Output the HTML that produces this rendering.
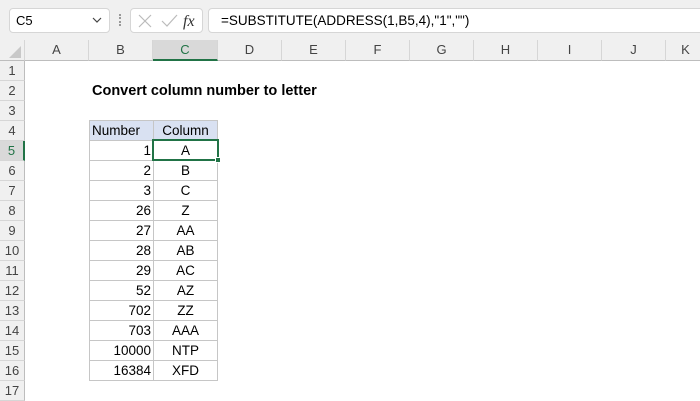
<!DOCTYPE html><html><head><style>
*{margin:0;padding:0;box-sizing:border-box}
body{width:700px;height:400px;overflow:hidden;background:#fff;font-family:"Liberation Sans",Calibri,sans-serif;position:relative;font-size:13px;color:#000}
.a{position:absolute}
.top{left:0;top:0;width:700px;height:40px;background:#f0f0f0}
.box{background:#fff;border:1px solid #d6d6d6;border-radius:4px}
.ch{top:40px;height:21px;background:#f0f0f0;border-bottom:1px solid #bdbdbd;border-right:1px solid #d6d6d6;text-align:center;line-height:20px;color:#444;font-size:13px}
.rh{left:0;width:25px;height:20px;background:#f0f0f0;border-bottom:1px solid #d6d6d6;border-right:1px solid #bdbdbd;text-align:center;line-height:20px;color:#444;font-size:13px}
.c{height:20px;line-height:20px;border-right:1px solid #c6c6c6;border-bottom:1px solid #c6c6c6;font-size:13.5px;padding:0 2px}
</style></head><body>
<div class="a top"></div>
<div class="a box" style="left:9px;top:8px;width:101px;height:25px;line-height:23px;padding-left:6px">C5</div>
<svg class="a" style="left:92px;top:16px" width="10" height="8"><path d="M1 2 L5 6 L9 2" stroke="#444" fill="none" stroke-width="1.2"/></svg>
<div class="a" style="left:119px;top:14px;width:2px;height:12px;border-left:2px dotted #999"></div>
<div class="a box" style="left:130px;top:8px;width:73px;height:25px"></div>
<svg class="a" style="left:136px;top:12px" width="65" height="18"><path d="M3 3 L15 15 M15 3 L3 15" stroke="#bbb" stroke-width="1.2"/><path d="M26 9 L31 14 L41 3" stroke="#bbb" stroke-width="1.2" fill="none"/><text x="47" y="14" font-family="Liberation Serif" font-style="italic" font-size="16" fill="#333">fx</text></svg>
<div class="a box" style="left:208px;top:8px;width:500px;height:25px;line-height:23px;padding-left:12px;font-size:13.5px">=SUBSTITUTE(ADDRESS(1,B5,4),"1","")</div>
<div class="a ch" style="left:0;width:25px;background:#f0f0f0"></div>
<svg class="a" style="left:8px;top:45px" width="14" height="14"><path d="M13 1 L13 13 L1 13Z" fill="#c8c8c8"/></svg>
<div class="a ch" style="left:25px;width:64px">A</div>
<div class="a ch" style="left:89px;width:64px">B</div>
<div class="a ch" style="left:153px;width:65px;background:#d9d9d9;border-bottom:2px solid #217346;color:#217346">C</div>
<div class="a ch" style="left:218px;width:64px">D</div>
<div class="a ch" style="left:282px;width:64px">E</div>
<div class="a ch" style="left:346px;width:64px">F</div>
<div class="a ch" style="left:410px;width:64px">G</div>
<div class="a ch" style="left:474px;width:64px">H</div>
<div class="a ch" style="left:538px;width:64px">I</div>
<div class="a ch" style="left:602px;width:64px">J</div>
<div class="a ch" style="left:666px;width:40px">K</div>
<div class="a rh" style="top:61px">1</div><div class="a rh" style="top:81px">2</div><div class="a rh" style="top:101px">3</div><div class="a rh" style="top:121px">4</div>
<div class="a rh" style="top:141px;background:#d9d9d9;border-right:2px solid #217346;color:#217346">5</div>
<div class="a rh" style="top:161px">6</div><div class="a rh" style="top:181px">7</div><div class="a rh" style="top:201px">8</div><div class="a rh" style="top:221px">9</div><div class="a rh" style="top:241px">10</div><div class="a rh" style="top:261px">11</div><div class="a rh" style="top:281px">12</div><div class="a rh" style="top:301px">13</div><div class="a rh" style="top:321px">14</div><div class="a rh" style="top:341px">15</div><div class="a rh" style="top:361px">16</div><div class="a rh" style="top:381px">17</div>
<div class="a" style="left:92px;top:81px;line-height:20px;font-weight:bold;font-size:14.5px">Convert column number to letter</div>
<div class="a" style="left:89px;top:120px;width:129px;border-left:1px solid #c6c6c6;border-top:1px solid #c6c6c6">
<div style="display:flex;background:#d9e1f2"><div class="c" style="width:64px">Number</div><div class="c" style="width:64px;text-align:center">Column</div></div>
<div style="display:flex"><div class="c" style="width:64px;text-align:right">1</div><div class="c" style="width:64px;text-align:center">A</div></div>
<div style="display:flex"><div class="c" style="width:64px;text-align:right">2</div><div class="c" style="width:64px;text-align:center">B</div></div>
<div style="display:flex"><div class="c" style="width:64px;text-align:right">3</div><div class="c" style="width:64px;text-align:center">C</div></div>
<div style="display:flex"><div class="c" style="width:64px;text-align:right">26</div><div class="c" style="width:64px;text-align:center">Z</div></div>
<div style="display:flex"><div class="c" style="width:64px;text-align:right">27</div><div class="c" style="width:64px;text-align:center">AA</div></div>
<div style="display:flex"><div class="c" style="width:64px;text-align:right">28</div><div class="c" style="width:64px;text-align:center">AB</div></div>
<div style="display:flex"><div class="c" style="width:64px;text-align:right">29</div><div class="c" style="width:64px;text-align:center">AC</div></div>
<div style="display:flex"><div class="c" style="width:64px;text-align:right">52</div><div class="c" style="width:64px;text-align:center">AZ</div></div>
<div style="display:flex"><div class="c" style="width:64px;text-align:right">702</div><div class="c" style="width:64px;text-align:center">ZZ</div></div>
<div style="display:flex"><div class="c" style="width:64px;text-align:right">703</div><div class="c" style="width:64px;text-align:center">AAA</div></div>
<div style="display:flex"><div class="c" style="width:64px;text-align:right">10000</div><div class="c" style="width:64px;text-align:center">NTP</div></div>
<div style="display:flex"><div class="c" style="width:64px;text-align:right">16384</div><div class="c" style="width:64px;text-align:center">XFD</div></div>
</div>
<div class="a" style="left:152px;top:139px;width:67px;height:22px;border:2px solid #217346"></div>
<div class="a" style="left:215px;top:157px;width:6px;height:6px;background:#217346;border:1px solid #fff"></div>
</body></html>
